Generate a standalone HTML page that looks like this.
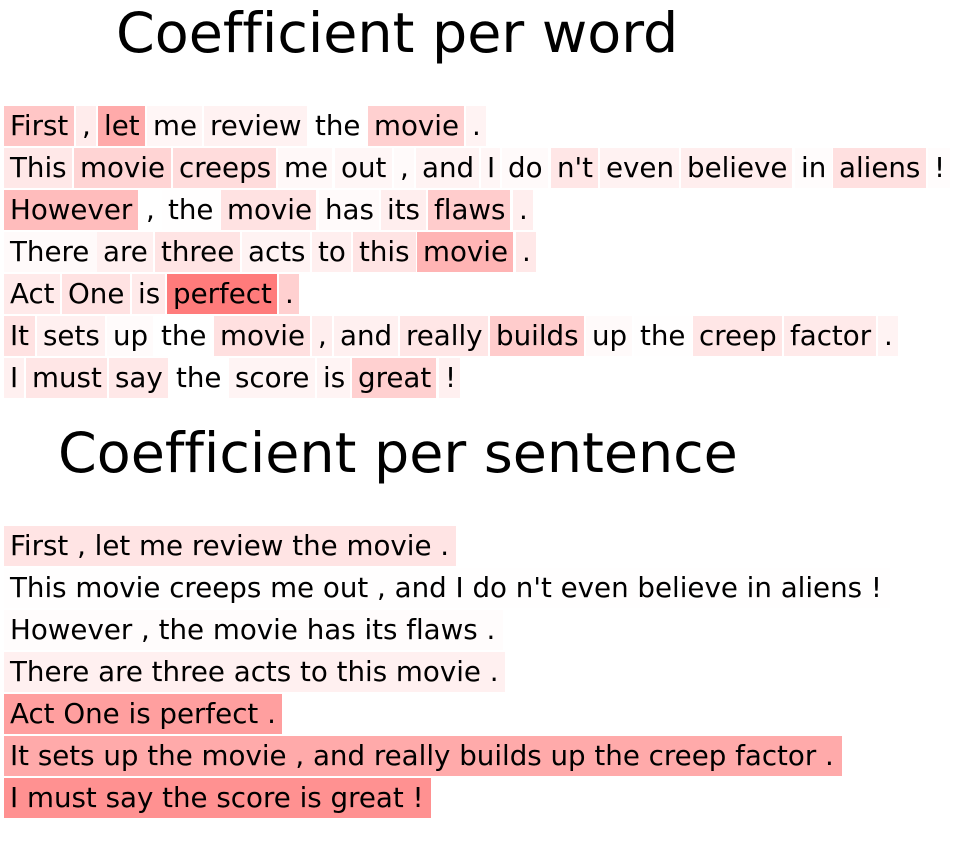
<!DOCTYPE html>
<html><head><meta charset="utf-8"><style>
body{margin:0;width:954px;height:844px;background:#fff;position:relative;overflow:hidden;font-family:"DejaVu Sans","Liberation Sans",sans-serif;color:#000;font-variant-ligatures:none}
.t{position:absolute;font-size:55.5px;line-height:64px;white-space:nowrap}
.b{position:absolute;height:40px;line-height:40px;font-size:27.7px;padding-left:6px;box-sizing:border-box;white-space:nowrap;overflow:visible}
</style></head><body>
<div class="t" style="left:116px;top:2px">Coefficient per word</div>
<div class="t" style="left:58px;top:422px">Coefficient per sentence</div>
<div id="w"></div>
<script>
var rows=[
[106,[["First",4,74,"#ffc6c6"],[",",76,96,"#ffecec"],["let",98,145,"#ffaaaa"],["me",147,202,"#fff6f6"],["review",204,307,"#fff2f2"],["the",309,366,"#fff"],["movie",368,464,"#ffd0d0"],[".",466,486,"#fff3f3"]]],
[148,[["This",4,72,"#ffe8e8"],["movie",74,171,"#ffd4d4"],["creeps",173,276,"#ffdcdc"],["me",278,332,"#fff8f8"],["out",335,392,"#fff6f6"],[",",394,414,"#fffafa"],["and",416,479,"#fff3f3"],["I",481,500,"#fff6f6"],["do",502,548,"#fffafa"],["n't",551,598,"#ffe6e6"],["even",600,679,"#fff2f2"],["believe",681,792,"#ffeeee"],["in",795,832,"#fffcfc"],["aliens",833,926,"#ffe0e0"],["!",928,950,"#fffcfc"]]],
[190,[["However",4,138,"#ffbcbc"],[",",140,160,"#fff"],["the",162,220,"#fffefe"],["movie",221,316,"#ffe2e2"],["has",319,379,"#fffafa"],["its",381,426,"#ffeeee"],["flaws",428,510,"#ffcccc"],[".",513,533,"#ffeeee"]]],
[232,[["There",4,97,"#fffafa"],["are",97,153,"#fff0f0"],["three",155,240,"#ffe4e4"],["acts",242,310,"#fff3f3"],["to",312,351,"#ffefef"],["this",353,416,"#ffe4e4"],["movie",417,513,"#ffb4b4"],[".",516,536,"#ffe8e8"]]],
[274,[["Act",4,60,"#ffeaea"],["One",62,130,"#ffe2e2"],["is",132,165,"#ffeaea"],["perfect",167,277,"#ff7b7b"],[".",279,299,"#ffd0d0"]]],
[316,[["It",4,35,"#ffe2e2"],["sets",37,105,"#fff0f0"],["up",107,153,"#fffbfb"],["the",155,212,"#fff"],["movie",214,310,"#ffe0e0"],[",",312,332,"#ffeeee"],["and",334,398,"#fff0f0"],["really",400,488,"#ffe6e6"],["builds",490,584,"#ffcccc"],["up",586,632,"#fffafa"],["the",634,692,"#fffefe"],["creep",693,782,"#ffe6e6"],["factor",784,876,"#ffeaea"],[".",878,898,"#fff3f3"]]],
[358,[["I",4,24,"#fff0f0"],["must",26,107,"#ffe6e6"],["say",109,168,"#ffe8e8"],["the",170,228,"#fff"],["score",229,315,"#fff4f4"],["is",317,350,"#fff4f4"],["great",352,436,"#ffd0d0"],["!",439,460,"#fff0f0"]]]
];
var s=[
["First , let me review the movie .",456,"#ffe4e4"],
["This movie creeps me out , and I do n't even believe in aliens !",890,"#fffefe"],
["However , the movie has its flaws .",503,"#fffcfc"],
["There are three acts to this movie .",505,"#fff0f0"],
["Act One is perfect .",282,"#ff9f9f"],
["It sets up the movie , and really builds up the creep factor .",842,"#ffaaaa"],
["I must say the score is great !",431,"#ff9191"]];
var h="";
rows.forEach(function(r){r[1].forEach(function(w){h+='<div class="b" style="top:'+r[0]+'px;left:'+w[1]+'px;width:'+(w[2]-w[1])+'px;background:'+w[3]+'">'+w[0]+'</div>';});});
s.forEach(function(x,i){h+='<div class="b" style="top:'+(526+42*i)+'px;left:4px;width:'+(x[1]-4)+'px;background:'+x[2]+'">'+x[0]+'</div>';});
document.getElementById("w").innerHTML=h;
</script>
</body></html>
